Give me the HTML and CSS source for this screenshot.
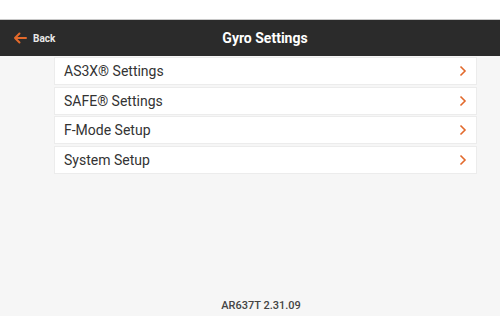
FILE: index.html
```html
<!DOCTYPE html>
<html lang="en">
<head>
  <meta charset="UTF-8" />
  <meta name="viewport" content="width=device-width, initial-scale=1.0"/>
  <title>Gyro Settings</title>
  <link rel="stylesheet" href="styles.css">
</head>
<body>

<div class="screen">
  <div class="topbar">
    <a class="back" href="#">
      <svg width="14" height="12" viewBox="0 0 14 12">
        <path d="M13 6H2M6.5 1.5L2 6l4.5 4.5" fill="none" stroke="#e2692b" stroke-width="2" stroke-linecap="round" stroke-linejoin="round"/>
      </svg>
      Back
    </a>
    <h1 class="title">Gyro Settings</h1>
  </div>

  <div class="content">
    <ul class="menu">
      <li><span>AS3X® Settings</span><svg width="8" height="12" viewBox="0 0 8 12"><path d="M1.5 1.5L6 6l-4.5 4.5" fill="none" stroke="#e2692b" stroke-width="1.6"/></svg></li>
      <li><span>SAFE® Settings</span><svg width="8" height="12" viewBox="0 0 8 12"><path d="M1.5 1.5L6 6l-4.5 4.5" fill="none" stroke="#e2692b" stroke-width="1.6"/></svg></li>
      <li><span>F-Mode Setup</span><svg width="8" height="12" viewBox="0 0 8 12"><path d="M1.5 1.5L6 6l-4.5 4.5" fill="none" stroke="#e2692b" stroke-width="1.6"/></svg></li>
      <li><span>System Setup</span><svg width="8" height="12" viewBox="0 0 8 12"><path d="M1.5 1.5L6 6l-4.5 4.5" fill="none" stroke="#e2692b" stroke-width="1.6"/></svg></li>
    </ul>

    <div class="version">AR637T 2.31.09</div>
  </div>
</div>

</body>
</html>
```

FILE: styles.css
```css
body {
  margin: 0;
  background-color: #fff;
  font-family: Roboto, "Liberation Sans", Arial, sans-serif;
}

.screen {
  padding-top: 19px;
  height: 297px;
  display: flex;
  flex-direction: column;
}

.topbar {
  display: flex;
  align-items: center;
  height: 37px;
  background-color: #2b2b2b;
  border-top: 1px solid #c8c8c8;
  box-sizing: border-box;
}

.back {
  display: flex;
  align-items: center;
  gap: 6px;
  width: 60px;
  padding-left: 13px;
  box-sizing: border-box;
  color: #e8e8e8;
  text-decoration: none;
  font-size: 10px;
  font-weight: bold;
}

.title {
  flex: 1;
  margin: 0;
  padding-right: 30px;
  text-align: center;
  color: #fff;
  font-size: 14px;
  font-weight: bold;
}

.content {
  flex: 1;
  background-color: #f6f6f6;
  display: flex;
  flex-direction: column;
}

.menu {
  list-style: none;
  margin: 1px 0 0 54px;
  padding: 0;
  width: 423px;
  display: flex;
  flex-direction: column;
  gap: 1.5px;
}

.menu li {
  display: flex;
  align-items: center;
  justify-content: space-between;
  height: 26px;
  padding: 0 9px 0 9px;
  background-color: #fff;
  border: 1px solid #ececec;
  color: #333;
  font-size: 14px;
}

.version {
  margin-top: auto;
  padding: 0 0 4px 22px;
  text-align: center;
  color: #444;
  font-size: 11px;
  font-weight: 500;
}
```
